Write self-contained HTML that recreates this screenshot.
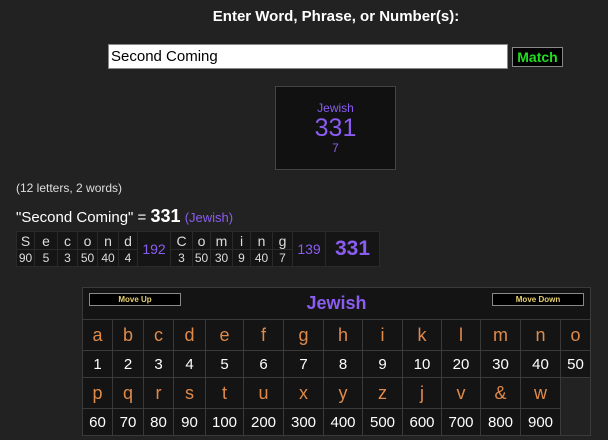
<!DOCTYPE html>
<html><head><meta charset="utf-8"><style>
*{box-sizing:border-box;margin:0;padding:0}
body{width:608px;height:440px;background:#222;font-family:"Liberation Sans",Arial,sans-serif;position:relative;overflow:hidden;color:#fff}
.abs{position:absolute}
table{border-collapse:collapse;table-layout:fixed}
#bd{left:16px;top:231px;width:363px;background:#151515}
#bd td{border:1px solid #2a2a2a;text-align:center;color:#ddd;font-size:12px;padding:0;height:17px}
#bd td.l{font-size:14px;height:18px}
#gt{left:0;top:0;width:508px;background:#141414;border:1px solid #3a3a3a}
#gt td{border:1px solid #3a3a3a;text-align:center;padding:0}
#gt td.l{color:#e08a4a;font-size:18px;height:31px}
#gt td.n{color:#fff;font-size:15px;height:27px}
.btn{position:absolute;top:5px;width:92px;height:13px;border:1px solid #888;background:#000;color:#e6d070;font-size:8px;font-weight:bold;text-align:center;line-height:11px}
</style></head><body>
<div class="abs" style="left:0;width:672px;top:8px;text-align:center;font-weight:bold;font-size:15px;color:#fff">Enter Word, Phrase, or Number(s):</div>
<div class="abs" style="left:108px;top:44px;width:400px;height:25px;background:#fff;border:1px solid #888;color:#000;font-size:15px;line-height:23px;padding-left:2px">Second Coming</div>
<div class="abs" style="left:512px;top:47px;width:51px;height:20px;background:#000;border:1px solid #888;color:#22dd22;font-weight:bold;font-size:14px;text-align:center;line-height:18px">Match</div>
<div class="abs" style="left:275px;top:86px;width:121px;height:84px;background:#111;border:1px solid #444;text-align:center;color:#8a5cf0">
<div style="font-size:12px;margin-top:14px">Jewish</div>
<div style="font-size:25px;line-height:26px">331</div>
<div style="font-size:12px">7</div></div>
<div class="abs" style="left:16px;top:181px;font-size:12px;color:#ddd">(12 letters, 2 words)</div>
<div class="abs" style="left:16px;top:206px;font-size:15px;color:#fff">"Second Coming" = <b style="font-size:18px">331</b> <span style="color:#8a5cf0;font-size:13px">(Jewish)</span></div>
<table id="bd" class="abs">
<colgroup><col style="width:18px"><col style="width:23px"><col style="width:20px"><col style="width:20px"><col style="width:21px"><col style="width:19px"><col style="width:33px"><col style="width:22px"><col style="width:18px"><col style="width:22px"><col style="width:18px"><col style="width:22px"><col style="width:20px"><col style="width:33px"><col style="width:54px"></colgroup>
<tr><td class="l">S</td><td class="l">e</td><td class="l">c</td><td class="l">o</td><td class="l">n</td><td class="l">d</td><td rowspan="2" style="color:#8a5cf0;font-size:14px">192</td><td class="l">C</td><td class="l">o</td><td class="l">m</td><td class="l">i</td><td class="l">n</td><td class="l">g</td><td rowspan="2" style="color:#8a5cf0;font-size:14px">139</td><td rowspan="2" style="color:#8a5cf0;font-size:21px;font-weight:bold">331</td></tr>
<tr><td>90</td><td>5</td><td>3</td><td>50</td><td>40</td><td>4</td><td>3</td><td>50</td><td>30</td><td>9</td><td>40</td><td>7</td></tr>
</table>
<div class="abs" style="left:82px;top:287px;width:508px;height:148px;">
<table id="gt" class="abs">
<colgroup><col style="width:30px"><col style="width:31px"><col style="width:30px"><col style="width:32px"><col style="width:38px"><col style="width:40px"><col style="width:40px"><col style="width:39px"><col style="width:40px"><col style="width:39px"><col style="width:39px"><col style="width:40px"><col style="width:40px"><col style="width:30px"></colgroup>
<tr><td colspan="14" style="height:32px;position:relative;font-size:18px;font-weight:bold;color:#8a5cf0">Jewish<div class="btn" style="left:6px">Move Up</div><div class="btn" style="right:6px">Move Down</div></td></tr>
<tr><td class="l">a</td><td class="l">b</td><td class="l">c</td><td class="l">d</td><td class="l">e</td><td class="l">f</td><td class="l">g</td><td class="l">h</td><td class="l">i</td><td class="l">k</td><td class="l">l</td><td class="l">m</td><td class="l">n</td><td class="l">o</td></tr>
<tr><td class="n">1</td><td class="n">2</td><td class="n">3</td><td class="n">4</td><td class="n">5</td><td class="n">6</td><td class="n">7</td><td class="n">8</td><td class="n">9</td><td class="n">10</td><td class="n">20</td><td class="n">30</td><td class="n">40</td><td class="n">50</td></tr>
<tr><td class="l">p</td><td class="l">q</td><td class="l">r</td><td class="l">s</td><td class="l">t</td><td class="l">u</td><td class="l">x</td><td class="l">y</td><td class="l">z</td><td class="l">j</td><td class="l">v</td><td class="l">&amp;</td><td class="l">w</td><td rowspan="2" style="background:#222;border:none"></td></tr>
<tr><td class="n">60</td><td class="n">70</td><td class="n">80</td><td class="n">90</td><td class="n">100</td><td class="n">200</td><td class="n">300</td><td class="n">400</td><td class="n">500</td><td class="n">600</td><td class="n">700</td><td class="n">800</td><td class="n">900</td></tr>
</table></div>
</body></html>
